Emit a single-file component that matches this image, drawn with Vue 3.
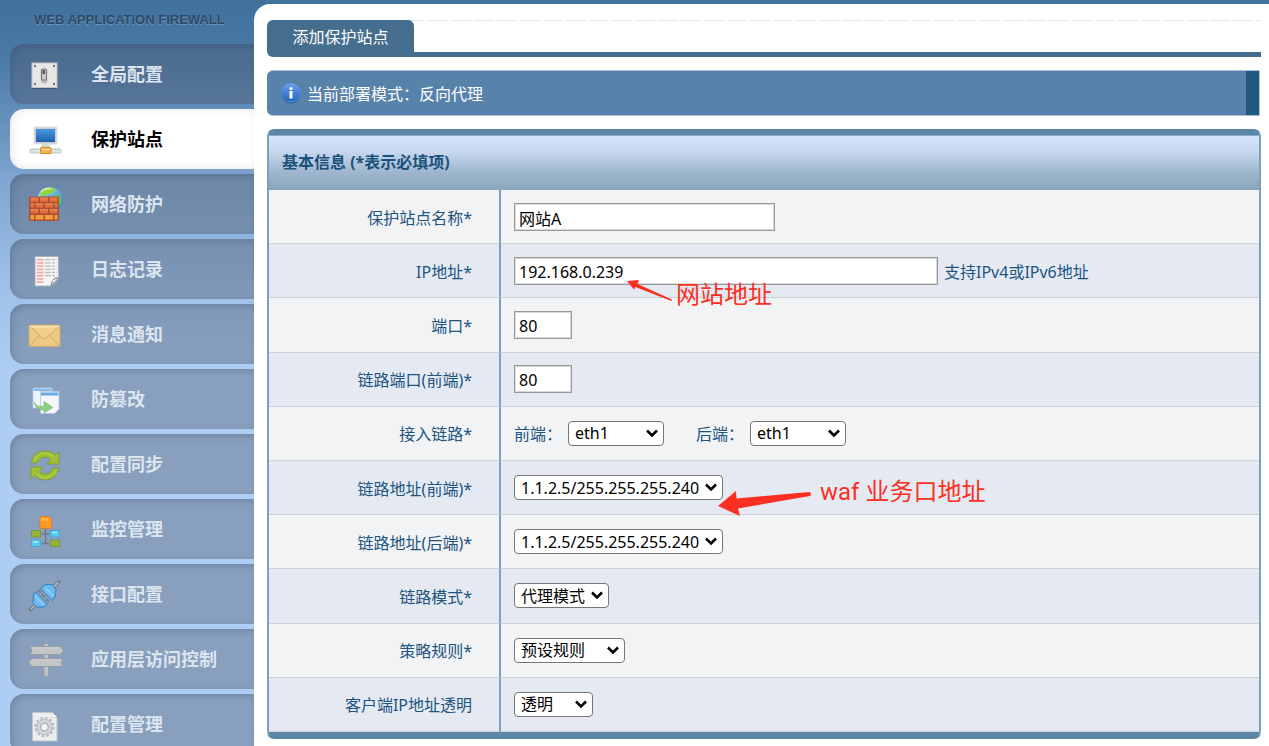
<script setup>
import { ref } from 'vue'

const menu = [
  { icon: 'switch', label: '全局配置' },
  { icon: 'site', label: '保护站点' },
  { icon: 'wall', label: '网络防护' },
  { icon: 'log', label: '日志记录' },
  { icon: 'mail', label: '消息通知' },
  { icon: 'files', label: '防篡改' },
  { icon: 'sync', label: '配置同步' },
  { icon: 'monitor', label: '监控管理' },
  { icon: 'plug', label: '接口配置' },
  { icon: 'sign', label: '应用层访问控制' },
  { icon: 'config', label: '配置管理' }
]
const active = ref('site')

const form = ref({
  name: '网站A',
  ip: '192.168.0.239',
  port: '80',
  linkPort: '80',
  front: 'eth1',
  back: 'eth1',
  frontAddr: '1.1.2.5/255.255.255.240',
  backAddr: '1.1.2.5/255.255.255.240',
  mode: '代理模式',
  policy: '预设规则',
  clientIp: '透明'
})
</script>

<template>
  <div class="layout">
    <aside class="sidebar">
      <div class="brand">WEB APPLICATION FIREWALL</div>
      <nav>
        <a
          v-for="item in menu"
          :key="item.icon"
          href="#"
          class="menu-item"
          :class="{ active: active === item.icon }"
          @click.prevent="active = item.icon"
        >
          <svg class="menu-icon" viewBox="0 0 36 36" aria-hidden="true">
            <g v-if="item.icon === 'switch'">
              <rect x="4" y="8" width="25" height="25" rx="1" fill="#2c4055" opacity=".5" />
              <rect x="4" y="7" width="25" height="24.500" fill="#e9e7e6" stroke="#c4c2c2" />
              <g fill="#77787b">
                <circle cx="7" cy="10" r="1.200" /><circle cx="26" cy="10" r="1.200" />
                <circle cx="7" cy="28" r="1.200" /><circle cx="26" cy="28" r="1.200" />
              </g>
              <path d="M15 14L20 25L17 28L13 26Z" fill="#bcb9b9" />
              <rect x="13.500" y="13" width="5" height="11" rx="1" fill="#cfcccb" stroke="#7b7a7a" stroke-width="1.200" />
              <rect x="14.500" y="14" width="2.500" height="4" fill="#59595b" />
            </g>

            <g v-else-if="item.icon === 'site'">
              <rect x="6" y="6" width="23" height="17" rx="1" fill="#c9cdd2" stroke="#dfe2e6" />
              <rect x="8" y="8" width="19" height="13" fill="url(#screen)" />
              <path d="M14 23H21L22 27H13Z" fill="#d5dad9" />
              <rect x="2" y="28" width="31" height="4" rx="1" fill="#dbe6e2" stroke="#a9bcb8" stroke-width=".8" />
              <rect x="12.500" y="26.500" width="10.500" height="6" rx="1" fill="#f4b04a" stroke="#d98a25" />
              <path d="M14 28.500H22" stroke="#fde0a1" stroke-width="1.500" />
            </g>

            <g v-else-if="item.icon === 'wall'">
              <circle cx="22" cy="14" r="12.800" fill="url(#globe)" />
              <path d="M14 5C18 1 25 1 28 4C25 5 25 8 21 8C18 8 18 11 12 10Z" fill="#8ed639" />
              <path d="M27 8C31 8 34 12 33 17L30 20C28 16 30 13 27 12Z" fill="#71c62e" />
              <path d="M13 6C16 3 20 2 23 3" stroke="#d8f5ab" stroke-width="1.500" fill="none" />
              <rect x="1" y="10.500" width="30" height="24.500" rx="1" fill="#a65034" />
              <g fill="url(#brick)">
                <rect x="2.500" y="11.500" width="8" height="4.500" /><rect x="12" y="11.500" width="8" height="4.500" /><rect x="21.500" y="11.500" width="8" height="4.500" />
                <rect x="2.500" y="17.200" width="3.500" height="4.500" /><rect x="7.500" y="17.200" width="8" height="4.500" /><rect x="17" y="17.200" width="8" height="4.500" /><rect x="26.500" y="17.200" width="3" height="4.500" />
                <rect x="2.500" y="23" width="8" height="4.500" /><rect x="12" y="23" width="8" height="4.500" /><rect x="21.500" y="23" width="8" height="4.500" />
              </g>
              <g fill="#f59b3a">
                <rect x="2.500" y="29" width="3.500" height="4.500" /><rect x="7.500" y="29" width="8" height="4.500" /><rect x="17" y="29" width="8" height="4.500" /><rect x="26.500" y="29" width="3" height="4.500" />
              </g>
            </g>

            <g v-else-if="item.icon === 'log'">
              <path d="M7 5.500H30.500V28L24 35H7Z" fill="#f5f3f4" stroke="#a7acb3" stroke-width=".8" />
              <path v-for="n in 8" :key="n" :d="`M8.500 ${5.500 + n * 3.200}H15.500`" stroke="#eeaeae" stroke-width="1.800" />
              <path v-for="n in 6" :key="'g' + n" :d="`M17 ${5.500 + n * 3.200}H28.500`" stroke="#bdbcc0" stroke-width="1.300" stroke-dasharray="6 1 3 1" />
              <path d="M30.500 27C27 26 24 28 23 35Z" fill="#c3c4c6" stroke="#77797c" stroke-width=".8" />
              <path d="M29 28L25 32L24.500 29.500Z" fill="#f6f6f6" />
            </g>

            <g v-else-if="item.icon === 'mail'">
              <rect x="1" y="9" width="31" height="21.500" rx="1" fill="#ecca83" stroke="#c9a969" />
              <path d="M2 29.500L12.500 18.500M31 29.500L20.500 18.500" stroke="#cdaa65" fill="none" />
              <path d="M2 10L14 21.500Q16.500 24 19 21.500L31 10Z" fill="#f0d08d" stroke="#c9a562" />
              <path d="M2 10.500H31" stroke="#f8e8ba" stroke-width="1.500" />
            </g>

            <g v-else-if="item.icon === 'files'">
              <rect x="5" y="7" width="19" height="20" rx="1" fill="#eef5fd" stroke="#b5d1ed" stroke-width=".8" />
              <rect x="5.500" y="7.500" width="18" height="2.500" fill="#83bbe9" />
              <path d="M12.500 10.500H31V28L26.500 32.500H12.500Z" fill="#f3f7fd" stroke="#b4c6de" stroke-width=".8" />
              <rect x="13" y="11.500" width="17.500" height="3" fill="#6ba9e2" />
              <path d="M6 21C8 25 11 26 16 25.500V20.500L25 26.500L16 32V29C10 29 7 26 6 21Z" fill="#8ccf83" stroke="#6fba76" stroke-width=".6" />
            </g>

            <g v-else-if="item.icon === 'sync'" fill="#9fc136" stroke="#78982c" stroke-width=".8" stroke-linejoin="round">
              <path d="M3.500 17C5 8 10 5 17 5C21 5 24 6 27 9L31 6V18H19L23 13.500C20 10 12 10 9 17Z" />
              <path d="M31 22C29 30 24 34 17 34C13 34 9 32 7 29.500L3 33V21H15L11.500 25.500C15 29.500 22 29 25.500 22Z" />
              <path d="M6 15C9 8 17 4 26 10.500M28 24C25 31 16 35 8 28.500" fill="none" stroke="#b0cf4b" stroke-width="1.200" />
            </g>

            <g v-else-if="item.icon === 'monitor'">
              <path d="M17.500 17V33M14 23H21M14 32.500H21" stroke="#6d7a86" stroke-width="1.400" fill="none" />
              <path d="M12 5.500H21L23.500 8V17.500H12Z" fill="#ff9825" stroke="#de761c" stroke-width=".7" />
              <path d="M13 7H20V10H13Z" fill="#ffb545" />
              <g stroke-width=".7">
                <rect x="3.500" y="19.500" width="9" height="6.500" fill="#94b434" stroke="#6f912c" />
                <rect x="22.500" y="19.500" width="9" height="6.500" fill="#50cdec" stroke="#3c9fca" />
                <rect x="3.500" y="29" width="9" height="6.500" fill="#50cdec" stroke="#3c9fca" />
                <rect x="22.500" y="29" width="9" height="6.500" fill="#94b434" stroke="#6f912c" />
              </g>
              <path d="M24 21.500H29M5 31H10" stroke="#a3f0fc" stroke-width="1.500" />
            </g>

            <g v-else-if="item.icon === 'plug'">
              <path d="M1.500 34.500L8 28M25 12L31.500 5" stroke="#636b72" stroke-width="3" />
              <path d="M2.500 33.500L8 28M25 12L30.500 6" stroke="#c8c5bd" stroke-width="1.400" />
              <path d="M7.500 15.500L19.500 28.500L16 31L8.500 31L5 27L5.500 19Z" fill="#6cb9f0" stroke="#347fb9" />
              <path d="M12.500 12.500L17.500 8.500L24 8.500L28 13L27.500 20L24 24.500Z" fill="#6cb9f0" stroke="#347fb9" />
              <path d="M10 14L21.500 26.500" stroke="#6d7b85" stroke-width="1.800" stroke-dasharray="4 2" />
              <path d="M7.500 20L15.500 29M17 11.500L25.500 20.500" stroke="#8fd0f8" stroke-width="1.800" />
            </g>

            <g v-else-if="item.icon === 'sign'" fill="#c2c4c5" stroke="#959b9f" stroke-width=".9">
              <rect x="16" y="2.500" width="4.500" height="33" rx="1.500" />
              <path d="M2 5.500H32.500L35.500 9.500L32.500 13.500H2L4 9.500Z" />
              <path d="M4 17.500H35L33 21.500L35 25.500H4L.500 21.500Z" />
              <path d="M4 7H32M4 19H33" stroke="#d0d1d2" />
            </g>

            <g v-else>
              <path d="M4.500 6.500H24L29 11.500V35H4.500Z" fill="#eceeef" stroke="#bfc5ca" />
              <path d="M24 6.500V11.500H29" fill="#fff" stroke="#d4d7d9" />
              <circle cx="16.500" cy="21" r="9" fill="none" stroke="#bdc1c5" stroke-width="2.500" stroke-dasharray="3 1.700" />
              <circle cx="16.500" cy="21" r="7.500" fill="#d5d8da" stroke="#b3b8bd" />
              <circle cx="16.500" cy="21" r="3.800" fill="#f6f7f8" stroke="#adb2b7" stroke-width="1.400" />
            </g>
          </svg>
          <span>{{ item.label }}</span>
        </a>
      </nav>
    </aside>

    <main class="content">
      <div class="tabs">
        <button type="button" class="tab">添加保护站点</button>
      </div>

      <div class="notice">
        <svg class="notice-icon" viewBox="0 0 22 22" aria-hidden="true">
          <circle cx="11" cy="11.500" r="10" fill="#28599e" />
          <circle cx="11" cy="10.500" r="9.500" fill="url(#info)" stroke="#5b8fd8" />
          <circle cx="11" cy="6.500" r="1.600" fill="#fff" />
          <rect x="9.500" y="9" width="3" height="7.500" rx=".5" fill="#fff" />
        </svg>
        <span>当前部署模式：反向代理</span>
      </div>

      <form class="panel" @submit.prevent>
        <h2 class="panel-title">基本信息 (*表示必填项)</h2>
        <table class="fields">
          <tbody>
            <tr>
              <th><label for="name">保护站点名称*</label></th>
              <td><input id="name" v-model="form.name" class="w-name" type="text"></td>
            </tr>
            <tr>
              <th><label for="ip">IP地址*</label></th>
              <td>
                <div class="line">
                  <input id="ip" v-model="form.ip" class="w-ip" type="text">
                  <span class="hint">支持IPv4或IPv6地址</span>
                  <div class="note note-site">
                    <svg width="48" height="22" viewBox="0 0 48 22" aria-hidden="true">
                      <path d="M1 1L13 0L11.500 4L46 19.500L45.500 21L9.500 7L8 9.500Z" />
                    </svg>
                    <span>网站地址</span>
                  </div>
                </div>
              </td>
            </tr>
            <tr>
              <th><label for="port">端口*</label></th>
              <td><input id="port" v-model="form.port" class="w-port" type="text"></td>
            </tr>
            <tr>
              <th><label for="linkPort">链路端口(前端)*</label></th>
              <td><input id="linkPort" v-model="form.linkPort" class="w-port" type="text"></td>
            </tr>
            <tr>
              <th>接入链路*</th>
              <td>
                <div class="line">
                  <label for="front">前端：</label>
                  <select id="front" v-model="form.front" class="w-eth"><option>eth1</option></select>
                  <label for="back" class="second">后端：</label>
                  <select id="back" v-model="form.back" class="w-eth"><option>eth1</option></select>
                </div>
              </td>
            </tr>
            <tr>
              <th><label for="frontAddr">链路地址(前端)*</label></th>
              <td>
                <div class="line">
                  <select id="frontAddr" v-model="form.frontAddr" class="w-addr"><option>1.1.2.5/255.255.255.240</option></select>
                  <div class="note note-waf">
                    <svg width="96" height="26" viewBox="0 0 96 26" aria-hidden="true">
                      <path d="M0 15L18 0L18.500 7.500L91 1A2.200 2.200 0 0 1 92 5L20 17.500L22 25Z" />
                    </svg>
                    <span>waf 业务口地址</span>
                  </div>
                </div>
              </td>
            </tr>
            <tr>
              <th><label for="backAddr">链路地址(后端)*</label></th>
              <td><select id="backAddr" v-model="form.backAddr" class="w-addr"><option>1.1.2.5/255.255.255.240</option></select></td>
            </tr>
            <tr>
              <th><label for="mode">链路模式*</label></th>
              <td><select id="mode" v-model="form.mode" class="w-mode"><option>代理模式</option></select></td>
            </tr>
            <tr>
              <th><label for="policy">策略规则*</label></th>
              <td><select id="policy" v-model="form.policy" class="w-policy"><option>预设规则</option></select></td>
            </tr>
            <tr>
              <th><label for="clientIp">客户端IP地址透明</label></th>
              <td><select id="clientIp" v-model="form.clientIp" class="w-client"><option>透明</option></select></td>
            </tr>
          </tbody>
        </table>
      </form>
    </main>

    <!-- gradients shared by the icons -->
    <svg class="defs" aria-hidden="true">
      <defs>
        <linearGradient id="screen" x1="0" y1="0" x2="0" y2="1">
          <stop offset="0" stop-color="#4a9ae0" /><stop offset="1" stop-color="#1e5fae" />
        </linearGradient>
        <linearGradient id="globe" x1="0" y1="0" x2="1" y2="1">
          <stop offset="0" stop-color="#a9e0f5" /><stop offset="1" stop-color="#1f7fd0" />
        </linearGradient>
        <linearGradient id="brick" x1="0" y1="0" x2="0" y2="1">
          <stop offset="0" stop-color="#ec8450" /><stop offset="1" stop-color="#dc6232" />
        </linearGradient>
        <linearGradient id="info" x1="0" y1="0" x2="0" y2="1">
          <stop offset="0" stop-color="#6ea2ea" /><stop offset="1" stop-color="#2361bd" />
        </linearGradient>
      </defs>
    </svg>
  </div>
</template>

<style>
body {
  margin: 0;
  overflow: hidden;
}
</style>

<style scoped>
* {
  box-sizing: border-box;
}
.layout {
  display: flex;
  height: 100vh;
  overflow: hidden;
  position: relative;
  font-family: "Noto Sans", "Noto Sans CJK SC", sans-serif;
  font-size: 16px;
  background: linear-gradient(#40719b 0, #4a7ba9 60px, #7fa5d0 180px, #9dbfe8 280px, #aecdf5 370px);
}
.sidebar {
  flex: 0 0 254px;
  padding-left: 10px;
}
.brand {
  height: 44px;
  padding-left: 24px;
  line-height: 40px;
  font-family: "Liberation Sans", Arial, sans-serif;
  font-size: 13px;
  font-weight: bold;
  color: #2c4a68;
  text-shadow: 0 1px 1px rgba(255, 255, 255, .25);
}
nav {
  display: flex;
  flex-direction: column;
  gap: 5px;
}
.menu-item {
  display: flex;
  align-items: center;
  gap: 27px;
  height: 60px;
  padding-left: 18px;
  border-radius: 14px 0 0 14px;
  background: rgba(79, 90, 107, .4);
  box-shadow: inset 2px 2px 6px rgba(40, 60, 90, .25);
  color: #dce5ef;
  font-size: 18px;
  font-weight: bold;
  line-height: 24px;
  text-decoration: none;
}
.menu-item.active {
  background: #fff;
  box-shadow: inset 2px 0 8px rgba(40, 60, 90, .12);
  color: #000;
}
.menu-icon {
  flex: none;
  width: 36px;
  height: 36px;
}
.content {
  flex: 1;
  min-width: 0;
  margin-top: 4px;
  padding: 16px 8px 0 13px;
  border-radius: 16px 0 0 0;
  background: #fff;
}
.tabs {
  display: flex;
  height: 37px;
  border-bottom: 5px solid #456d8e;
  border-radius: 6px 0 0 6px;
  background: repeating-linear-gradient(90deg, #dde6ef 0 20px, #fff 20px 23px) top / 100% 1px no-repeat;
}
.tab {
  width: 147px;
  padding: 0;
  border: 0;
  border-radius: 6px 6px 0 0;
  background: #456d8e;
  color: #fff;
  font: inherit;
}
.notice {
  display: flex;
  align-items: center;
  gap: 5px;
  height: 46px;
  margin: 13px 1px 13px 0;
  padding-left: 13px;
  border: 1px solid #a9c0d6;
  border-left: 0;
  border-radius: 6px 0 0 6px;
  background: linear-gradient(#22577d, #22577d) right / 13px 100% no-repeat, #5783ab;
  color: #fff;
}
.notice-icon {
  width: 22px;
  height: 22px;
}
.panel {
  border: 2px solid #7ba1c2;
  border-top: 6px solid #5d87a6;
  border-bottom: 7px solid #5d87a6;
  border-radius: 7px;
}
.panel-title {
  height: 55px;
  margin: 0;
  padding-left: 13px;
  border-top: 1px solid #87aac8;
  background: linear-gradient(#d6e5fb, #c5d6ed 30%, #a0b8cf 65%, #8aa6ba);
  color: #1b527c;
  font-size: 16px;
  line-height: 53px;
}
.fields {
  width: 100%;
  height: 542px;
  border-spacing: 0;
  color: #1d5480;
}
.fields tr {
  height: 54px;
  background: #f1f3f5;
}
.fields tr:nth-child(even) {
  background: #e4e9f2;
}
.fields th,
.fields td {
  padding: 0;
  border-bottom: 1px solid #cdd2d8;
}
.fields th {
  width: 232px;
  padding-right: 27px;
  border-right: 2px solid #7ba1c2;
  font-weight: normal;
  text-align: right;
}
.fields td {
  padding-left: 13px;
}
input,
select {
  display: block;
  margin: 0;
  color: #000;
  font: inherit;
}
input {
  height: 28px;
  padding: 2px 4px 0;
  border: 1px solid #989898;
  background: #fff;
  box-shadow: inset 0 0 0 1px #dadada;
}
select {
  height: 25px;
  padding: 0 6px;
  appearance: none;
  border: 1px solid #767676;
  border-radius: 4px;
  background: #fff url("data:image/svg+xml,%3Csvg xmlns='http://www.w3.org/2000/svg' width='14' height='9'%3E%3Cpath d='M2 1.500L7 6.500L12 1.500' fill='none' stroke='black' stroke-width='2.600'/%3E%3C/svg%3E") no-repeat right 4px center;
}
.w-name { width: 261px; }
.w-ip { width: 424px; }
.w-port { width: 58px; }
.w-eth { width: 96px; }
.w-addr { width: 209px; }
.w-mode { width: 95px; }
.w-policy { width: 111px; }
.w-client { width: 79px; }
.line {
  display: flex;
  align-items: center;
  gap: 6px;
  position: relative;
}
.second {
  margin-left: 26px;
}
/* red remarks lying over the form */
.note {
  display: flex;
  position: absolute;
  color: #fb3022;
  font-family: Roboto, "Noto Sans CJK SC", sans-serif;
  font-size: 24px;
  line-height: 30px;
  white-space: nowrap;
}
.note svg {
  flex: none;
  fill: #fb3022;
}
.note-site {
  left: 112px;
  top: 23px;
  gap: 2px;
}
.note-waf {
  left: 204px;
  top: 2px;
  gap: 6px;
}
.note-waf svg {
  margin-top: 14px;
}
.defs {
  position: absolute;
  width: 0;
  height: 0;
}
</style>
